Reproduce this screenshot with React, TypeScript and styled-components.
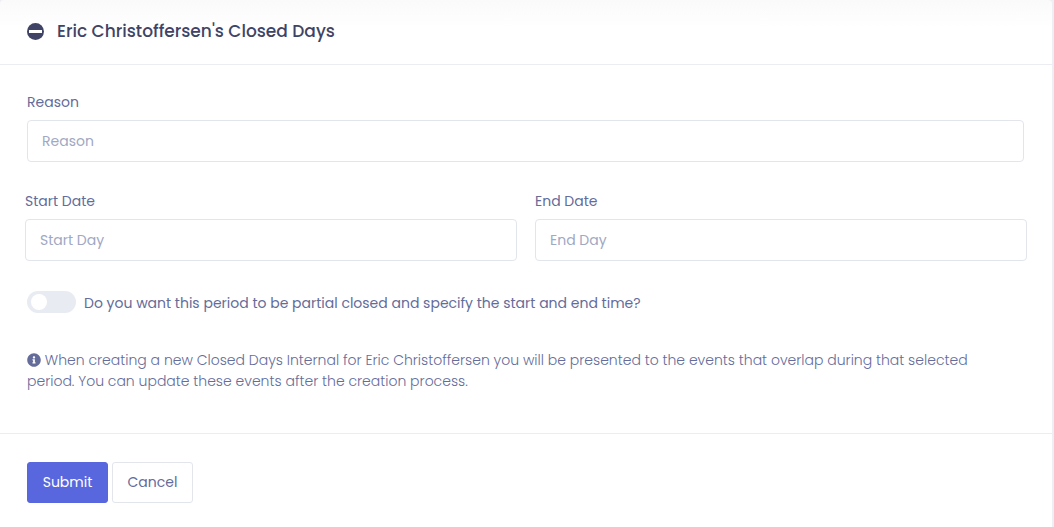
import React from "react";
import styled, { createGlobalStyle } from "styled-components";
import { FaInfoCircle } from "react-icons/fa";

const GlobalStyle = createGlobalStyle`
  *, *::before, *::after { box-sizing: border-box; }
  body {
    margin: 0;
    background: #eeeef5;
    color: #646c9a;
    font: 400 14px/21px Poppins, Inter, sans-serif;
  }
`;

const Portlet = styled.form`
  display: flex;
  flex-direction: column;
  min-height: 100vh;
  margin-right: 2px;
  border-radius: 4px 4px 0 0;
  background: linear-gradient(#fafafa, #ffffff 28px);
`;

const Header = styled.header`
  display: flex;
  align-items: center;
  gap: 13px;
  padding: 19px 27px 21px;
  border-bottom: 1px solid #ebedf2;
  color: #3f4466;
`;

const Title = styled.h1`
  margin: 0;
  font-size: 17px;
  line-height: 24px;
  font-weight: 500;
`;

const HeaderIcon = styled.svg`
  width: 17px;
  height: 17px;
`;

const Body = styled.div`
  display: flex;
  flex-direction: column;
  padding: 27px 28px 41px 27px;
`;

const Field = styled.div`
  display: flex;
  flex: 1;
  flex-direction: column;
  gap: 7px;
  min-width: 0;
`;

const DateRow = styled.div`
  display: flex;
  gap: 18px;
  margin: 29px -3px 30px -2px;
`;

const TextInput = styled.input`
  width: 100%;
  height: 42px;
  padding: 0 14px;
  border: 1px solid #e2e5ec;
  border-radius: 4px;
  background: #ffffff;
  color: #495057;
  font: inherit;

  &::placeholder {
    color: #a1a8c3;
    opacity: 1;
  }
`;

const SwitchRow = styled.div`
  display: flex;
  align-items: flex-end;
  gap: 8px;

  label {
    line-height: 20px;
  }
`;

const Switch = styled.input`
  appearance: none;
  display: flex;
  align-items: center;
  flex: none;
  width: 49px;
  height: 22px;
  margin: 0;
  padding: 0 4px;
  border-radius: 11px;
  background: #e8ebf1;

  &::before {
    content: "";
    width: 16px;
    height: 16px;
    border-radius: 50%;
    background: #ffffff;
  }

  &:checked {
    justify-content: flex-end;
    background: #5867dd;
  }
`;

const Note = styled.p`
  margin: 37px 0 0;
  padding-right: 12px;
  font-weight: 300;

  svg {
    vertical-align: -2px;
  }
`;

const Footer = styled.footer`
  display: flex;
  gap: 4px;
  padding: 28px 27px;
  border-top: 1px solid #ebedf2;
`;

const Button = styled.button<{ $primary?: boolean }>`
  width: 81px;
  height: 41px;
  padding: 0;
  border: 1px solid ${(p) => (p.$primary ? "#5867dd" : "#e2e5ec")};
  border-radius: 3px;
  background: ${(p) => (p.$primary ? "#5867dd" : "#ffffff")};
  color: ${(p) => (p.$primary ? "#ffffff" : "#646c9a")};
  font: inherit;
`;

export default function App() {
  return (
    <>
      <GlobalStyle />
      <Portlet onSubmit={(e: React.FormEvent) => e.preventDefault()}>
        <Header>
          <HeaderIcon viewBox="0 0 17 17" aria-hidden="true">
            <circle cx="8.5" cy="8.5" r="8.5" fill="currentColor" />
            <rect x="2" y="7" width="13" height="3" fill="#ffffff" />
          </HeaderIcon>
          <Title>Eric Christoffersen's Closed Days</Title>
        </Header>
        <Body>
          <Field>
            <label htmlFor="reason">Reason</label>
            <TextInput id="reason" placeholder="Reason" />
          </Field>
          <DateRow>
            <Field>
              <label htmlFor="start">Start Date</label>
              <TextInput id="start" placeholder="Start Day" />
            </Field>
            <Field>
              <label htmlFor="end">End Date</label>
              <TextInput id="end" placeholder="End Day" />
            </Field>
          </DateRow>
          <SwitchRow>
            <Switch type="checkbox" id="partial" />
            <label htmlFor="partial">
              Do you want this period to be partial closed and specify the start and end time?
            </label>
          </SwitchRow>
          <Note>
            <FaInfoCircle size={14} aria-hidden="true" /> When creating a new Closed Days Internal
            for Eric Christoffersen you will be presented to the events that overlap during that
            selected period. You can update these events after the creation process.
          </Note>
        </Body>
        <Footer>
          <Button type="submit" $primary>
            Submit
          </Button>
          <Button type="button">Cancel</Button>
        </Footer>
      </Portlet>
    </>
  );
}
